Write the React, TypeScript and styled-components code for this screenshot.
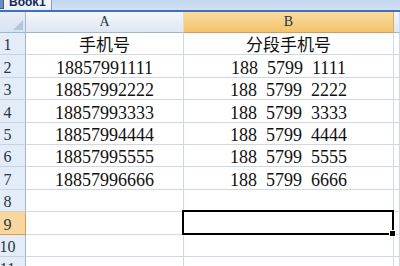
import styled, { createGlobalStyle } from 'styled-components'

const GlobalStyle = createGlobalStyle`
  html, body {
    margin: 0;
    padding: 0;
    background: #fff;
    overflow: hidden;
  }
`

const COLS = '26px 158px 210px 1fr'

type Row = {
  n: string
  a?: string
  b?: string
  h: number
  selected?: boolean
}

const rows: Row[] = [
  { n: '1', a: '手机号', b: '分段手机号', h: 22 },
  { n: '2', a: '18857991111', b: '188  5799  1111', h: 23 },
  { n: '3', a: '18857992222', b: '188  5799  2222', h: 22 },
  { n: '4', a: '18857993333', b: '188  5799  3333', h: 23 },
  { n: '5', a: '18857994444', b: '188  5799  4444', h: 22 },
  { n: '6', a: '18857995555', b: '188  5799  5555', h: 22 },
  { n: '7', a: '18857996666', b: '188  5799  6666', h: 23 },
  { n: '8', h: 22 },
  { n: '9', h: 23, selected: true },
  { n: '10', h: 22 },
  { n: '11', h: 22 },
]

const Window = styled.div`
  width: 400px;
  height: 266px;
  overflow: hidden;
  display: flex;
  flex-direction: column;
  background: #fff;
`

const TabStrip = styled.div`
  height: 10px;
  flex: none;
  display: flex;
  align-items: flex-end;
  overflow: hidden;
  background: linear-gradient(#c2d6ee, #d3e2f5);
  border-bottom: 2px solid #3f6fc1;
`

const Tab = styled.div`
  height: 10px;
  width: 52px;
  flex: none;
  display: flex;
  align-items: flex-end;
  gap: 5px;
  box-sizing: border-box;
  padding-bottom: 2px;
  background: linear-gradient(#f4f7fc, #e9f0f9);
  border-right: 1px solid #8d9db5;
  font: bold 12px/12px 'Liberation Sans', sans-serif;
  color: #102a5c;
`

const TabIcon = styled.span`
  width: 3px;
  height: 8px;
  background: #6a8fc4;
  border: 1px solid #3b5f96;
  border-left: none;
  margin-bottom: -1px;
`

const Sheet = styled.div`
  flex: 1;
  display: flex;
  flex-direction: column;
`

const HeaderRow = styled.div`
  height: 21px;
  flex: none;
  display: grid;
  grid-template-columns: ${COLS};
`

const BodyRow = styled.div<{ $h: number }>`
  height: ${(p) => p.$h}px;
  flex: none;
  display: grid;
  grid-template-columns: ${COLS};
`

const Corner = styled.div`
  position: relative;
  box-sizing: border-box;
  background: linear-gradient(#e6edf7, #d8e3f2);
  border-right: 1px solid #9eb6ce;
  border-bottom: 1px solid #9eb6ce;

  &::after {
    content: '';
    position: absolute;
    right: 2px;
    bottom: 2px;
    border-left: 10px solid transparent;
    border-bottom: 10px solid #b4c6dd;
  }
`

const ColHead = styled.div<{ $selected?: boolean }>`
  box-sizing: border-box;
  display: flex;
  align-items: center;
  justify-content: center;
  font: 14px 'Liberation Serif', serif;
  color: #27354a;
  background: ${(p) =>
    p.$selected
      ? 'linear-gradient(#f9dba4, #f3c46a)'
      : 'linear-gradient(#f3f6fb, #dfe7f3)'};
  border-right: 1px solid ${(p) => (p.$selected ? '#f2a54a' : '#d2dceb')};
  border-bottom: 1px solid ${(p) => (p.$selected ? '#f29536' : '#9eb6ce')};
`

const RowHead = styled.div<{ $selected?: boolean }>`
  box-sizing: border-box;
  display: flex;
  align-items: flex-end;
  justify-content: center;
  padding-right: 10px;
  font: 16px/18px 'Liberation Serif', serif;
  color: #27354a;
  background: ${(p) => (p.$selected ? '#f8d79c' : '#e4ecf7')};
  border-right: 1px solid ${(p) => (p.$selected ? '#f29536' : '#9eb6ce')};
  border-bottom: 1px solid ${(p) => (p.$selected ? '#f29536' : '#c5d3e4')};
`

const Cell = styled.div<{ $active?: boolean }>`
  position: ${(p) => (p.$active ? 'relative' : 'static')};
  box-sizing: border-box;
  display: flex;
  align-items: flex-end;
  justify-content: center;
  white-space: pre;
  font: 18px/18px 'Liberation Serif', 'Noto Sans CJK SC', serif;
  color: #111;
  border-right: 1px solid #d0d7e5;
  border-bottom: 1px solid #d0d7e5;
`

const CjkText = styled.span`
  font: 17px/20px 'Noto Sans CJK SC', sans-serif;
  color: #111;
`

const Selection = styled.div`
  position: absolute;
  top: -2px;
  left: -2px;
  right: -1px;
  bottom: -1px;
  border: 2px solid #000;
  z-index: 2;
`

const FillHandle = styled.div`
  position: absolute;
  right: -4px;
  bottom: -4px;
  width: 5px;
  height: 5px;
  background: #000;
  border: 1px solid #fff;
  z-index: 3;
`

export default function App() {
  return (
    <Window>
      <GlobalStyle />
      <TabStrip>
        <Tab>
          <TabIcon />
          Book1
        </Tab>
      </TabStrip>
      <Sheet>
        <HeaderRow>
          <Corner />
          <ColHead>A</ColHead>
          <ColHead $selected>B</ColHead>
          <ColHead />
        </HeaderRow>
        {rows.map((r) => (
          <BodyRow key={r.n} $h={r.h}>
            <RowHead $selected={r.selected}>{r.n}</RowHead>
            <Cell>{r.n === '1' ? <CjkText>{r.a}</CjkText> : r.a}</Cell>
            <Cell $active={r.selected}>
              {r.n === '1' ? <CjkText>{r.b}</CjkText> : r.b}
              {r.selected && (
                <Selection>
                  <FillHandle />
                </Selection>
              )}
            </Cell>
            <Cell />
          </BodyRow>
        ))}
      </Sheet>
    </Window>
  )
}
